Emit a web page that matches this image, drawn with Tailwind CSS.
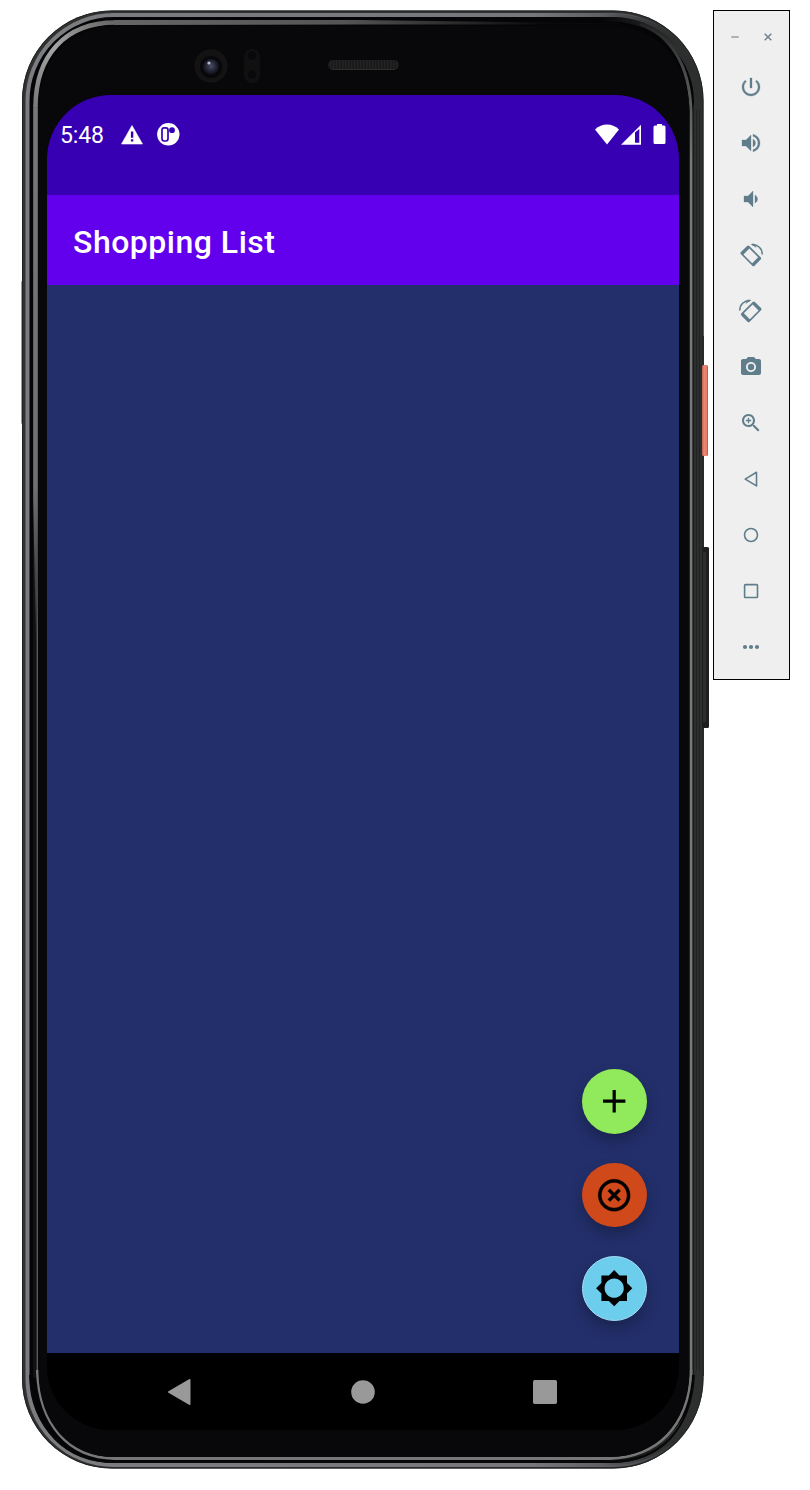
<!DOCTYPE html>
<html lang="en">
<head>
<meta charset="utf-8">
<title>Shopping List</title>
<script src="https://cdn.jsdelivr.net/npm/@tailwindcss/browser@4"></script>
</head>
<body class="bg-white font-['Roboto',sans-serif]">
<div class="flex h-[1490px] w-[810px] items-start overflow-hidden">
  <!-- Device -->
  <main class="relative h-[1480px] w-[713px] shrink-0 pl-[47px] pt-[95px]">
    <svg class="absolute inset-0" width="713" height="1480" viewBox="0 0 713 1480" fill="none">
      <defs>
        <linearGradient id="rim" x1="0" y1="0" x2="1" y2="0">
          <stop offset="0" stop-color="#7c7d81"/><stop offset=".75" stop-color="#77787c"/><stop offset=".9" stop-color="#55565a"/><stop offset=".97" stop-color="#2c2d2d"/>
        </linearGradient>
        <linearGradient id="side" gradientUnits="userSpaceOnUse" x1="600" y1="0" x2="703" y2="0">
          <stop offset="0" stop-color="#2d2e2e" stop-opacity="0"/><stop offset=".75" stop-color="#2d2e2e"/>
        </linearGradient>
        <linearGradient id="band" x1="0" y1="0" x2="0" y2="1">
          <stop offset="0" stop-color="#777777"/><stop offset=".7" stop-color="#707070"/><stop offset=".9" stop-color="#3a3a3a"/><stop offset="1" stop-color="#111"/>
        </linearGradient>
        <linearGradient id="thin" gradientUnits="userSpaceOnUse" x1="0" y1="500" x2="0" y2="640">
          <stop offset="0" stop-color="#646464" stop-opacity="0"/><stop offset="1" stop-color="#646464"/>
        </linearGradient>
        <linearGradient id="topband" x1="0" y1="0" x2="1" y2="0">
          <stop offset="0" stop-color="#666"/><stop offset=".45" stop-color="#555"/><stop offset=".85" stop-color="#0a0a0c"/>
        </linearGradient>
        <linearGradient id="corner" gradientUnits="userSpaceOnUse" x1="35" y1="110" x2="115" y2="23">
          <stop offset="0" stop-color="#777"/><stop offset=".5" stop-color="#a5a5a5"/><stop offset="1" stop-color="#666"/>
        </linearGradient>
        <linearGradient id="right" gradientUnits="userSpaceOnUse" x1="0" y1="20" x2="0" y2="160">
          <stop offset="0" stop-color="#222"/><stop offset=".4" stop-color="#4c4d50"/><stop offset="1" stop-color="#777"/>
        </linearGradient>
        <linearGradient id="red" x1="0" y1="0" x2="1" y2="0">
          <stop offset="0" stop-color="#b9604f"/><stop offset=".35" stop-color="#ee8873"/><stop offset=".75" stop-color="#e57d69"/><stop offset="1" stop-color="#a94f41"/>
        </linearGradient>
        <radialGradient id="lens" cx=".5" cy=".5" r=".5">
          <stop offset="0" stop-color="#4a4d68"/><stop offset=".3" stop-color="#242637"/><stop offset=".55" stop-color="#0a0a0f"/><stop offset=".65" stop-color="#121213"/><stop offset="1" stop-color="#141415"/>
        </radialGradient>
        <pattern id="mesh" width="3" height="3" patternUnits="userSpaceOnUse"><rect width="3" height="3" fill="#191919"/><rect width="1.4" height="3" fill="#232323"/></pattern>
      </defs>
      <rect x="700" y="336" width="4" height="1040" fill="#303131"/>
      <rect x="21.500" y="280" width="4" height="145" rx="2" fill="#3d3e3e"/>
      <rect x="22" y="10.500" width="681.500" height="1458" rx="90" fill="#303131"/>
      <rect x="22.500" y="11" width="680.500" height="1457" rx="89.500" stroke="#222"/>
      <rect x="27.500" y="15" width="672" height="1450" rx="86" fill="#050507" stroke="url(#rim)" stroke-width="4"/>
      <rect x="30" y="18" width="668" height="1443" rx="84" stroke="url(#side)" stroke-width="8"/>
      <path d="M696.500 110V1370M699.500 110V1370" stroke="#212222"/>
      <rect x="702" y="365" width="6" height="91" rx="1.500" fill="url(#red)"/>
      <rect x="702" y="547" width="7" height="181" rx="1.500" fill="#1d1e1e"/>
      <rect x="703" y="552" width="3" height="170" fill="#2c2d2d"/>
      <path d="M35.500 105V1378" stroke="#111" stroke-width="5"/>
      <path d="M33.200 105H37.800V520L37 650H36L33.200 500Z" fill="url(#band)"/>
      <path d="M36.700 500H37.900V1375H36.700Z" fill="url(#thin)"/>
      <path d="M35.500 106C36 56 65 22.500 115 22.500" stroke="url(#corner)" stroke-width="4.500"/>
      <path d="M114 20H360L620 23.500V24.500H360L114 25Z" fill="url(#topband)"/>
      <path d="M640 24C668 34 690 62 691 112V1375" stroke="url(#right)" stroke-width="3"/>
      <path d="M693.500 105V1375" stroke="#1a1a1a"/>
      <path d="M37.300 1370C39 1425 69 1458 114 1458.500H610C655 1457 689 1429 691 1370" stroke="#777" stroke-width="2.800"/>
      <path d="M30 1375C33 1430 66 1461.500 114 1462H612C660 1461 691 1430 694 1375" stroke="#070707" stroke-width="2"/>
      <path d="M38.500 110C39 60 70 26 115 26H610C656 26 688 59 689.500 110V1374C688 1423 656 1457 610 1457H114C69 1457 40 1423 38.500 1374Z" fill="#08080a"/>
      <circle cx="211" cy="66" r="16.500" fill="url(#lens)"/>
      <circle cx="211" cy="67" r="9.500" stroke="#08080b" stroke-width="3"/>
      <circle cx="209" cy="63" r="1.600" fill="#b5b7c6"/>
      <rect x="244" y="49" width="16" height="34" rx="8" fill="#101011"/>
      <circle cx="252" cy="55.500" r="5" fill="#09090b" stroke="#141416"/>
      <circle cx="252" cy="74.500" r="5" fill="#09090b" stroke="#141416"/>
      <rect x="328" y="60" width="71" height="10" rx="5" fill="url(#mesh)"/>
      <path d="M332 69.500H395" stroke="#2c2c2c"/>
    </svg>

    <!-- Screen -->
    <div class="relative flex h-[1335px] w-[632px] flex-col overflow-hidden rounded-[64px] bg-black text-white">
      <header class="flex h-[99.500px] shrink-0 items-start bg-[#3700b3] pl-[13px] pr-[13px] pt-[28px]">
        <span class="mt-px w-[61px] text-[23px] leading-6 tracking-[-0.1px]">5:48</span>
        <svg class="mt-[2px]" width="22" height="20" viewBox="0 0 22 20"><path d="M11 .5 21.500 19H.5Z" fill="#fff" stroke="#fff" stroke-width=".6" stroke-linejoin="round"/><path d="M9.900 6.500h2.400v6.200H9.900zM9.900 14.300h2.400v2.300H9.900z" fill="#3700b3"/></svg>
        <svg class="ml-[14px]" width="23" height="23" viewBox="0 0 23 23"><circle cx="11.300" cy="11.300" r="11.200" fill="#fff"/><rect x="5" y="4.800" width="6" height="13.200" rx="2.200" fill="none" stroke="#3700b3" stroke-width="1.700"/><circle cx="15" cy="7.200" r="2.900" fill="#3700b3"/></svg>
        <div class="ml-auto flex items-start">
          <svg class="mt-px" width="24" height="21" viewBox="0 0 24 21"><path d="M12 20.500 0 5.500C7-1.200 17-1.200 24 5.500Z" fill="#fff"/></svg>
          <svg class="ml-[2px] mt-px" width="20" height="21" viewBox="0 0 20 21"><path d="M20 .8V20.800H0Z" fill="#fff"/><path d="M14 8.500 18.300 5V18.800H14Z" fill="#3700b3"/></svg>
          <svg class="ml-[12px]" width="13" height="22" viewBox="0 0 13 22"><path d="M4 1h5v1.500h2a1.500 1.500 0 0 1 1.500 1.500v15.500A1.500 1.500 0 0 1 11 21H2a1.500 1.500 0 0 1-1.500-1.500V4A1.500 1.500 0 0 1 2 2.500h2z" fill="#fff"/></svg>
        </div>
      </header>
      <div class="flex h-[90px] shrink-0 items-center bg-[#6200ee] pl-[26px] pt-[4px]">
        <h1 class="text-[32px] font-medium leading-10 tracking-[0.500px]">Shopping List</h1>
      </div>
      <section class="flex flex-1 flex-col items-end justify-end gap-[29px] bg-[#222f6a] pb-[32.500px] pr-[32.200px]">
        <button aria-label="Add" class="flex size-[64.500px] items-center justify-center rounded-full bg-[#90ea5b] shadow-[0_7px_14px_rgba(0,0,0,0.25)]"><svg width="38.400" height="38.400" viewBox="0 0 24 24"><path d="M19 13h-6v6h-2v-6H5v-2h6V5h2v6h6z"/></svg></button>
        <button aria-label="Clear" class="flex size-[64.500px] items-center justify-center rounded-full bg-[#d0491b] shadow-[0_7px_14px_rgba(0,0,0,0.25)]"><svg width="38.400" height="38.400" viewBox="0 0 24 24"><path stroke="#000" stroke-width=".2" d="M14.590 8 12 10.590 9.410 8 8 9.410 10.590 12 8 14.590 9.410 16 12 13.410 14.590 16 16 14.590 13.410 12 16 9.410 14.590 8zM12 2C6.470 2 2 6.470 2 12s4.470 10 10 10 10-4.470 10-10S17.530 2 12 2zm0 18c-4.410 0-8-3.590-8-8s3.590-8 8-8 8 3.590 8 8-3.590 8-8 8z"/></svg></button>
        <button aria-label="Brightness" class="flex size-[64.500px] items-center justify-center rounded-full border border-[#a4dff4] bg-[#6ccdec] shadow-[0_7px_14px_rgba(0,0,0,0.25)]"><svg class="shrink-0" width="38.400" height="38.400" viewBox="0 0 24 24"><path d="M20 15.310 23.310 12 20 8.690V4h-4.690L12 .69 8.690 4H4v4.690L.69 12 4 15.310V20h4.690L12 23.310 15.310 20H20v-4.690zM12 18c-3.310 0-6-2.690-6-6s2.690-6 6-6 6 2.690 6 6-2.690 6-6 6z"/></svg></button>
      </section>
      <nav class="flex h-[77px] shrink-0 items-center justify-between bg-black pl-[120px] pr-[121px]">
        <svg width="25" height="28" viewBox="0 0 25 28"><path d="M22.500 2v24L2 14Z" fill="#999" stroke="#999" stroke-width="2" stroke-linejoin="round"/></svg>
        <svg width="24" height="24" viewBox="0 0 24 24"><circle cx="12" cy="12" r="11.800" fill="#999"/></svg>
        <svg width="25" height="24" viewBox="0 0 25 24"><rect width="24" height="24" rx="1.800" fill="#999"/></svg>
      </nav>
    </div>
  </main>

  <!-- Emulator toolbar -->
  <aside class="mt-[10px] flex h-[670px] w-[77px] shrink-0 flex-col border border-black bg-[#efefef] text-[#607d8b]">
    <div class="flex h-[48px] items-center justify-between pl-[17px] pr-[17px] pt-[4px]">
      <svg width="8" height="8" viewBox="0 0 8 8"><path d="M.3 4H7.700" stroke="#8c989e" stroke-width="1.400"/></svg>
      <svg width="8" height="8" viewBox="0 0 8 8"><path d="M.7.7 7.300 7.300M7.300.7.7 7.300" stroke="#6d7f88" stroke-width="1.400"/></svg>
    </div>
    <div class="flex h-[56px] items-center justify-center pr-[2px]"><svg width="24" height="24" viewBox="0 0 24 24" fill="currentColor" stroke="currentColor" stroke-width=".3"><path d="M13 3h-2v10h2V3zm4.830 2.170-1.420 1.420C17.990 7.860 19 9.810 19 12c0 3.870-3.130 7-7 7s-7-3.130-7-7c0-2.190 1.010-4.140 2.580-5.420L6.170 5.170C4.230 6.820 3 9.260 3 12c0 4.970 4.030 9 9 9s9-4.030 9-9c0-2.740-1.230-5.180-3.170-6.830z"/></svg></div>
    <div class="flex h-[56px] items-center justify-center pr-[2px]"><svg width="24" height="24" viewBox="0 0 24 24" fill="currentColor" stroke="currentColor" stroke-width=".3"><path d="M3 9v6h4l5 5V4L7 9H3zm13.500 3c0-1.770-1.020-3.290-2.500-4.030v8.050c1.480-.73 2.500-2.250 2.500-4.020zM14 3.230v2.060c2.890.86 5 3.540 5 6.710s-2.110 5.850-5 6.710v2.060c4.010-.91 7-4.490 7-8.770s-2.990-7.860-7-8.770z"/></svg></div>
    <div class="flex h-[56px] items-center justify-center pr-[2px]"><svg width="24" height="24" viewBox="0 0 24 24" fill="currentColor" stroke="currentColor" stroke-width=".3"><path d="M18.500 12c0-1.770-1.020-3.290-2.500-4.030v8.050c1.480-.73 2.500-2.250 2.500-4.020zM5 9v6h4l5 5V4L9 9H5z"/></svg></div>
    <div class="flex h-[56px] items-center justify-center pr-[2px]"><svg width="26" height="26" viewBox="0 0 26 26" fill="currentColor"><g transform="translate(12.800 13.800) rotate(45)"><path fill-rule="evenodd" d="M-8 -5.900H8A1.600 1.600 0 0 1 9.600 -4.300V4.300A1.600 1.600 0 0 1 8 5.900H-8A1.600 1.600 0 0 1 -9.600 4.300V-4.300A1.600 1.600 0 0 1 -8 -5.900ZM-6.200 -4.200V4.200H6.200V-4.200Z"/></g><path d="M14 2.600C20 2.400 24.200 6.800 24.300 12.500" fill="none" stroke="currentColor" stroke-width="1.500"/><path d="M12.500 2 16.300 1.700 18.600 6Z"/></svg></div>
    <div class="flex h-[56px] items-center justify-center pr-[2px]"><svg class="-scale-x-100" width="26" height="26" viewBox="0 0 26 26" fill="currentColor"><g transform="translate(12.800 13.800) rotate(45)"><path fill-rule="evenodd" d="M-8 -5.900H8A1.600 1.600 0 0 1 9.600 -4.300V4.300A1.600 1.600 0 0 1 8 5.900H-8A1.600 1.600 0 0 1 -9.600 4.300V-4.300A1.600 1.600 0 0 1 -8 -5.900ZM-6.200 -4.200V4.200H6.200V-4.200Z"/></g><path d="M14 2.600C20 2.400 24.200 6.800 24.300 12.500" fill="none" stroke="currentColor" stroke-width="1.500"/><path d="M12.500 2 16.300 1.700 18.600 6Z"/></svg></div>
    <div class="flex h-[56px] items-center justify-center pr-[2px]"><svg width="24" height="24" viewBox="0 0 24 24" fill="currentColor"><circle cx="12" cy="12" r="3.200"/><path d="M9 2 7.170 4H4c-1.100 0-2 .9-2 2v12c0 1.100.9 2 2 2h16c1.100 0 2-.9 2-2V6c0-1.100-.9-2-2-2h-3.170L15 2H9zm3 15c-2.760 0-5-2.240-5-5s2.240-5 5-5 5 2.240 5 5-2.240 5-5 5z"/></svg></div>
    <div class="flex h-[56px] items-center justify-center pr-[2px]"><svg width="24" height="24" viewBox="0 0 24 24" fill="currentColor"><path d="M15.500 14h-.79l-.28-.27C15.410 12.590 16 11.110 16 9.500 16 5.910 13.090 3 9.500 3S3 5.910 3 9.500 5.910 16 9.500 16c1.610 0 3.090-.59 4.230-1.570l.27.28v.79l5 4.990L20.490 19l-4.990-5zm-6 0C7.010 14 5 11.990 5 9.500S7.010 5 9.500 5 14 7.010 14 9.500 11.990 14 9.500 14z"/><path d="M9.500 6.800v5.400M6.800 9.500h5.400" stroke="currentColor" stroke-width="1.300"/></svg></div>
    <div class="flex h-[56px] items-center justify-center pr-[2px]"><svg width="24" height="24" viewBox="0 0 24 24" fill="none" stroke="currentColor" stroke-width="1.600" stroke-linejoin="round"><path d="M17.500 5.300v13.600L6.200 12.100Z"/></svg></div>
    <div class="flex h-[56px] items-center justify-center pr-[2px]"><svg width="24" height="24" viewBox="0 0 24 24" fill="none" stroke="currentColor" stroke-width="1.600"><circle cx="12" cy="12" r="6.500"/></svg></div>
    <div class="flex h-[56px] items-center justify-center pr-[2px]"><svg width="24" height="24" viewBox="0 0 24 24" fill="none" stroke="currentColor" stroke-width="1.600"><rect x="5.600" y="5.600" width="12.900" height="12.900" rx=".8"/></svg></div>
    <div class="flex h-[56px] items-center justify-center pr-[2px]"><svg width="24" height="24" viewBox="0 0 24 24" fill="currentColor"><circle cx="6" cy="12" r="2.100"/><circle cx="12" cy="12" r="2.100"/><circle cx="18" cy="12" r="2.100"/></svg></div>
  </aside>
</div>
</body>
</html>
